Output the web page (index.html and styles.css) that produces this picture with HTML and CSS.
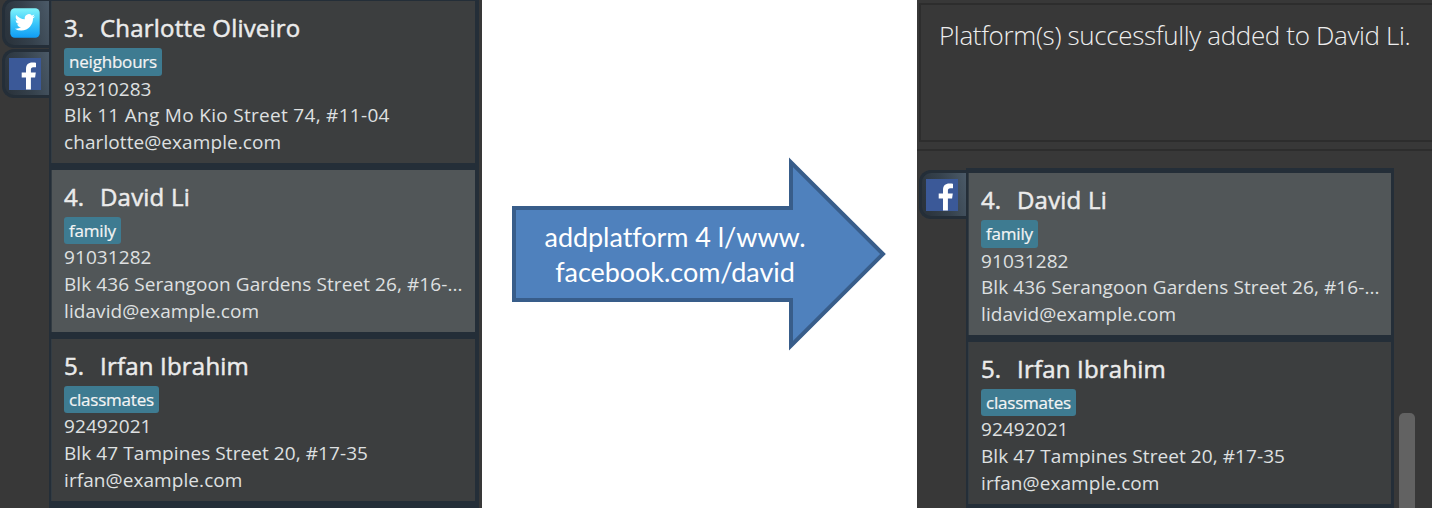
FILE: index.html
```
<!DOCTYPE html>
<html lang="en">
<head>
<meta charset="utf-8">
<title>Address book – addplatform</title>
<link rel="stylesheet" href="styles.css">
</head>
<body>
<svg class="defs" aria-hidden="true">
  <defs>
    <linearGradient id="sky" x1="0" y1="0" x2="0" y2="1">
      <stop offset="0" stop-color="#80f4fb"/><stop offset=".5" stop-color="#3cc8fa"/><stop offset="1" stop-color="#109cf4"/>
    </linearGradient>
    <symbol id="facebook" viewBox="0 0 32 32">
      <rect width="32" height="32" fill="#3b5998"/>
      <path fill="#fff" d="M17 31.500V19.500h-4.300v-5H17V11c0-4.300 2.500-6.400 6.300-6.400 1.800 0 3.100.1 3.700.2v4.500h-2.600c-2 0-2.500 1-2.500 2.500v2.700h4.900l-.7 5h-4.200v12z"/>
    </symbol>
    <symbol id="twitter" viewBox="0 0 30 30">
      <rect x=".3" y=".3" width="29.400" height="29.400" rx="4.500" fill="url(#sky)"/>
      <path fill="#fff" transform="translate(4.900 4.300) scale(.84)" d="M23.950 4.570a10 10 0 0 1-2.820.78 4.960 4.960 0 0 0 2.160-2.720c-.95.550-2 .95-3.130 1.180a4.920 4.920 0 0 0-8.380 4.480C7.690 8.100 4.070 6.130 1.640 3.160a4.820 4.820 0 0 0-.66 2.480c0 1.710.87 3.210 2.190 4.100a4.900 4.900 0 0 1-2.230-.62v.06a4.920 4.920 0 0 0 3.950 4.830 5 5 0 0 1-2.210.08 4.940 4.940 0 0 0 4.600 3.420A9.870 9.870 0 0 1 0 19.540a13.990 13.990 0 0 0 7.560 2.210c9.050 0 14-7.500 14-13.980 0-.21 0-.42-.02-.63a9.940 9.940 0 0 0 2.460-2.550z"/>
    </symbol>
  </defs>
</svg>
<main class="stage">
  <section class="panel before">
    <div class="tabs">
      <div class="tab"><svg class="twitter"><use href="#twitter"/></svg></div>
      <div class="tab"><svg class="facebook"><use href="#facebook"/></svg></div>
    </div>
    <div class="list">
      <article class="card">
        <h2 class="name"><span class="num">3.</span><span class="wide">Charlotte Oliveiro</span></h2>
        <span class="tag">neighbours</span>
        <p>93210283</p><p class="loose">Blk 11 Ang Mo Kio Street 74, #11-04</p><p>charlotte@example.com</p>
      </article>
      <article class="card selected">
        <h2 class="name"><span class="num">4.</span><span class="wide">David Li</span></h2>
        <span class="tag">family</span>
        <p>91031282</p><p>Blk 436 Serangoon Gardens Street 26, #16-...</p><p>lidavid@example.com</p>
      </article>
      <article class="card">
        <h2 class="name"><span class="num">5.</span><span class="wide">Irfan Ibrahim</span></h2>
        <span class="tag">classmates</span>
        <p>92492021</p><p>Blk 47 Tampines Street 20, #17-35</p><p>irfan@example.com</p>
      </article>
    </div>
  </section>
  <section class="command">
    <svg class="arrow" viewBox="0 0 378 196"><path d="M3 51H280V5.300L372 97L280 188.700V143H3z"/></svg>
    <p class="command-text"><span>addplatform 4 l/www.</span><span>facebook.com/david</span></p>
  </section>
  <section class="panel after">
    <div class="result"><span>Platform(s) successfully added to David Li.</span></div>
    <div class="content">
      <div class="tabs">
        <div class="tab"><svg class="facebook"><use href="#facebook"/></svg></div>
      </div>
      <div class="list">
        <article class="card selected">
          <h2 class="name"><span class="num">4.</span><span class="wide">David Li</span></h2>
          <span class="tag">family</span>
          <p>91031282</p><p>Blk 436 Serangoon Gardens Street 26, #16-...</p><p>lidavid@example.com</p>
        </article>
        <article class="card">
          <h2 class="name"><span class="num">5.</span><span class="wide">Irfan Ibrahim</span></h2>
          <span class="tag">classmates</span>
          <p>92492021</p><p>Blk 47 Tampines Street 20, #17-35</p><p>irfan@example.com</p>
        </article>
      </div>
      <div class="scrollbar"></div>
    </div>
  </section>
</main>
</body>
</html>
```
FILE: styles.css
```
* { box-sizing: border-box; }
body { margin: 0; background: #fff; font-family: "Open Sans", "Noto Sans", sans-serif; }
.defs { position: absolute; width: 0; height: 0; }
.stage { display: grid; grid-template-columns: 482px 435px 515px; width: 1432px; height: 508px; overflow: hidden; }
.panel { background: #383838; overflow: hidden; height: 508px; }
.before { display: flex; }
.tabs { width: 49px; padding-left: 2px; flex: none; }
.tab {
  height: 49px; border: 3px solid #242e38; border-right: 0; border-radius: 12px 0 0 12px;
  background: linear-gradient(75deg, #2b343d 10%, #35414c 50%, #4b5a68 100%);
  display: flex; align-items: center; padding-left: 5px;
}
.before .tab:first-child { height: 50px; margin-top: -2px; margin-bottom: 1px; }
.tab svg { display: block; }
.facebook { width: 32px; height: 32px; margin-left: -1px; }
.twitter { width: 30px; height: 30px; }
.list { width: 429.500px; flex: none; padding: 1px 3px 0 2px; background: #242e38; display: flex; flex-direction: column; gap: 6.500px; }
.before .list { padding-right: 3.500px; }
.card { height: 162.300px; flex: none; background: #3c3e3f; padding: 10px 12px 0; color: #dfe0e1; border-left: 1px solid #333c43; }
.selected { background: #515658; }
.name { display: flex; height: 37px; margin: 0; font-size: 24px; line-height: 33px; font-weight: 400; color: #ebebeb; -webkit-text-stroke: .5px #ebebeb; white-space: nowrap; }
.wide { letter-spacing: .2px; }
.num { width: 36px; flex: none; }
.tag { display: block; width: fit-content; height: 27.500px; padding: 0 5px; border-radius: 3px; background: #3e7b91; color: #f4f4f4; font-size: 17px; line-height: 27px; letter-spacing: -.2px; -webkit-text-stroke: .2px #f4f4f4; }
.card p { margin: 0; font-size: 19px; line-height: 26.700px; letter-spacing: .08px; white-space: nowrap; }
.card .loose { letter-spacing: .3px; }
.command { display: grid; }
.arrow { grid-area: 1 / 1; width: 378px; height: 196px; margin: 157px 0 0 29px; }
.arrow path { fill: #4f81bd; stroke: #385d8a; stroke-width: 4; }
.command-text { grid-area: 1 / 1; z-index: 1; margin: 219px 0 0 30px; width: 326px; display: flex; flex-direction: column; align-items: center; color: #fff; font: 27px/35px Lato, sans-serif; letter-spacing: -.05px; white-space: nowrap; }
.after { display: flex; flex-direction: column; }
.result { margin: 3px 0 0 2px; height: 139px; flex: none; border: 2px solid #2d2d2d; border-right: 0; padding: 12px 0 0 18px; font-size: 26px; line-height: 36px; font-weight: 300; letter-spacing: -.35px; color: #eee; white-space: nowrap; }
.content { margin-top: 7px; border-top: 2px solid #2d2d2d; flex: 1; display: flex; padding-top: 17px; min-height: 0; }
.after .tabs { padding-top: 2px; }
.after .list { width: 428px; padding-top: 5px; }
.scrollbar { width: 16px; height: 110px; margin: 245px 0 0 5px; border-radius: 5px; background: #626262; }
```
